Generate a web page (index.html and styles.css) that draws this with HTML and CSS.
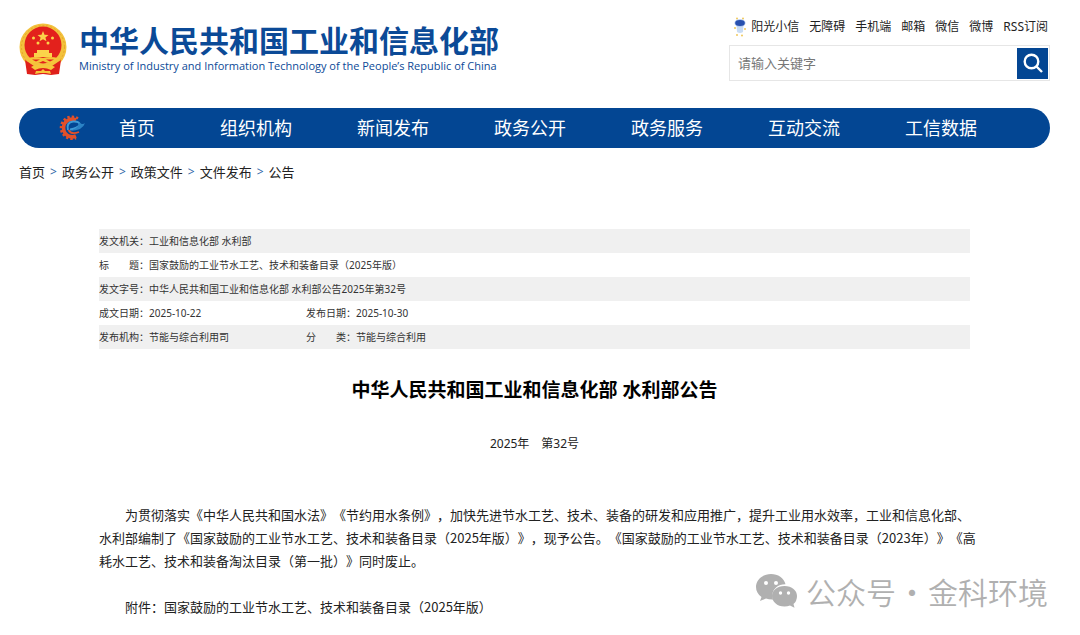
FILE: index.html
```html
<!DOCTYPE html>
<html lang="zh-CN">
<head>
<meta charset="utf-8">
<title>中华人民共和国工业和信息化部 水利部公告</title>
<link rel="stylesheet" href="styles.css">
</head>
<body>
<div class="page">
  <header class="header">
    <a class="brand" href="#">
      <svg class="emblem" viewBox="0 0 48 52" aria-hidden="true">
        <circle cx="24" cy="24" r="23.500" fill="#f3c23c"/>
        <circle cx="24" cy="24" r="21.500" fill="none" stroke="#e8a52c" stroke-width="1" stroke-dasharray="2 2"/>
        <circle cx="24" cy="22" r="18.500" fill="#e3211c"/>
        <path d="M24 8l1.500 3.700 4 .3-3.100 2.500 1.100 3.800-3.500-2.100-3.500 2.100 1.100-3.800-3.100-2.500 4-.3z" fill="#fbd34a"/>
        <g fill="#fbd34a"><circle cx="14.500" cy="15" r="1.500"/><circle cx="33.500" cy="15" r="1.500"/><circle cx="19" cy="20" r="1.500"/><circle cx="29" cy="20" r="1.500"/>
        <path d="M18 27h12v3h3v4H15v-4h3z"/></g>
        <path d="M6 37L8 51 16 52 24 51 32 52 40 51 42 37 33 43H15z" fill="#df201b"/>
        <path d="M9 35Q17 33 24 35Q31 33 39 35L35 40Q29 41 24 38Q19 41 13 40z" fill="#f6c63a"/>
        <path d="M13 36.500h8l-4 2zM35 36.500h-8l4 2z" fill="#e3211c"/>
        <path d="M12 44q6-4 12-1q6-3 12 1l-4 3q-8-4-16 0zM16 51l1-3h5l2-2 2 2h5l1 3-5-1h-6z" fill="#f6c63a"/>
      </svg>
      <span class="brand-text">
        <span class="brand-cn">中华人民共和国工业和信息化部</span>
        <span class="brand-en" lang="en">Ministry of Industry and Information Technology of the People’s Republic of China</span>
      </span>
    </a>
    <div class="tools">
      <nav class="quick" aria-label="快捷链接">
        <a class="mascot-link" href="#"><svg class="mascot" viewBox="0 0 12 20" aria-hidden="true">
          <g fill="#efc95c"><circle cx="3" cy="1.500" r="1"/><circle cx="9" cy="1.500" r="1"/><circle cx="1" cy="11" r="1"/><circle cx="11" cy="12" r="1"/><circle cx="3" cy="18" r="1"/><circle cx="8" cy="18.500" r="1"/></g>
          <path d="M2.500 8h7l-.5 7q-3 2-6 0z" fill="#c9dcf4"/>
          <ellipse cx="6" cy="6" rx="5.500" ry="3.800" fill="#a9c2ec"/><ellipse cx="6" cy="6" rx="4.800" ry="3" fill="#2850ae"/>
        </svg>阳光小信</a>
        <a href="#">无障碍</a>
        <a href="#">手机端</a>
        <a href="#">邮箱</a>
        <a href="#">微信</a>
        <a href="#">微博</a>
        <a href="#">RSS订阅</a>
      </nav>
      <form class="search">
        <input class="search-input" type="text" placeholder="请输入关键字" aria-label="请输入关键字">
        <button class="search-button" type="button" aria-label="搜索">
          <svg class="search-icon" viewBox="0 0 20 20" aria-hidden="true"><circle cx="8.500" cy="8.500" r="6.800"/><path d="M13.500 13.500L19 19"/></svg>
        </button>
      </form>
    </div>
  </header>

  <nav class="menu" aria-label="主导航">
    <svg class="gear" viewBox="0 0 28 26" aria-hidden="true">
      <path d="M18 5A8.800 8.800 0 1 0 18 21" fill="none" stroke="#e2502a" stroke-width="3.600"/>
      <path d="M20 3.500A11 11 0 1 0 18 23" fill="none" stroke="#e2502a" stroke-width="2.600" stroke-dasharray="2.300 2"/>
      <path d="M10 15Q8 7.500 15 6.500Q21 6 22 9.500Q20 13.500 12 14.500" fill="none" stroke="#3e9ad6" stroke-width="2"/>
      <path d="M21 8Q25 10 27 8Q25 15.500 12 16Q20 13.500 21 8z" fill="#2b82c4"/>
      <path d="M10.500 15Q13 20 21 17" fill="none" stroke="#e2502a" stroke-width="1.800"/>
    </svg>
    <a href="#">首页</a>
    <a href="#">组织机构</a>
    <a href="#">新闻发布</a>
    <a href="#">政务公开</a>
    <a href="#">政务服务</a>
    <a href="#">互动交流</a>
    <a href="#">工信数据</a>
  </nav>

  <nav class="crumbs" aria-label="当前位置">
    <a href="#">首页</a><span class="sep">&gt;</span>
    <a href="#">政务公开</a><span class="sep">&gt;</span>
    <a href="#">政策文件</a><span class="sep">&gt;</span>
    <a href="#">文件发布</a><span class="sep">&gt;</span>
    <a href="#">公告</a>
  </nav>

  <main class="article">
    <table class="meta">
      <colgroup><col class="col-label"><col class="col-value"><col class="col-label"><col></colgroup>
      <tbody>
        <tr><th scope="row">发文机关：</th><td colspan="3">工业和信息化部 水利部</td></tr>
        <tr><th scope="row">标　　题：</th><td colspan="3">国家鼓励的工业节水工艺、技术和装备目录（2025年版）</td></tr>
        <tr><th scope="row">发文字号：</th><td colspan="3">中华人民共和国工业和信息化部 水利部公告2025年第32号</td></tr>
        <tr><th scope="row">成文日期：</th><td>2025-10-22</td><th scope="row">发布日期：</th><td>2025-10-30</td></tr>
        <tr><th scope="row">发布机构：</th><td>节能与综合利用司</td><th scope="row">分　　类：</th><td>节能与综合利用</td></tr>
      </tbody>
    </table>
    <h1 class="title">中华人民共和国工业和信息化部 水利部公告</h1>
    <p class="number">2025年　第32号</p>
    <div class="body-text">
      <p>为贯彻落实《中华人民共和国水法》《节约用水条例》，加快先进节水工艺、技术、装备的研发和应用推广，提升工业用水效率，工业和信息化部、<br>水利部编制了《国家鼓励的工业节水工艺、技术和装备目录（2025年版）》，现予公告。《国家鼓励的工业节水工艺、技术和装备目录（2023年）》《高<br>耗水工艺、技术和装备淘汰目录（第一批）》同时废止。</p>
      <p>附件：国家鼓励的工业节水工艺、技术和装备目录（2025年版）</p>
    </div>
  </main>
</div>
<div class="watermark">
  <svg class="wechat" viewBox="0 0 42 34" aria-hidden="true">
    <path d="M15 0C6.500 0 0 5.800 0 13c0 4 2 7.500 5.500 10L4 27l6-2.500q3 1 7 .9C14 17 21 10 29.500 10.200 28 4 22 0 15 0z"/>
    <path d="M28.500 12C21 12 16 16.500 16 22s5 10.500 12.500 10.500q3 0 5.500-1l4.500 2.300-1-3.800Q41 27 41 22C41 16.500 36 12 28.500 12z"/>
    <g fill="#fff"><circle cx="10" cy="9" r="2"/><circle cx="20" cy="9" r="2"/><circle cx="24.500" cy="19" r="1.700"/><circle cx="32.500" cy="19" r="1.700"/></g>
  </svg>
  <span>公众号</span><span class="dot">·</span><span>金科环境</span>
</div>
</body>
</html>
```
FILE: styles.css
```css
* { box-sizing: border-box; }
body {
  margin: 0;
  background: #fff;
  color: #222;
  font-family: "Noto Sans", "Noto Sans CJK SC", sans-serif;
  text-spacing-trim: space-all;
}
a { color: inherit; text-decoration: none; }
p, h1 { margin: 0; }
.page { padding: 15px 30px 0 19px; }

.header {
  display: flex;
  justify-content: space-between;
  height: 93px;
}
.brand {
  display: flex;
  align-items: flex-start;
  gap: 12px;
  padding-top: 8px;
  color: #0b4a97;
  white-space: nowrap;
}
.emblem { width: 48px; height: 52px; }
.brand-text { display: flex; flex-direction: column; }
.brand-cn { font-size: 30px; line-height: 36px; font-weight: 700; }
.brand-en { font-family: "Open Sans", sans-serif; font-size: 11px; line-height: 14px; font-weight: 500; }

.tools { width: 321px; }
.quick {
  display: flex;
  justify-content: flex-end;
  gap: 10px;
  padding-right: 2px;
  font-size: 12px;
  line-height: 24px;
  white-space: nowrap;
}
.mascot-link { display: flex; align-items: center; gap: 5px; }
.mascot { width: 12px; height: 20px; }
.search {
  display: flex;
  align-items: center;
  height: 36px;
  margin-top: 6px;
  padding-right: 1px;
  border: 1px solid #e6e6e6;
}
.search-input {
  flex: 1;
  min-width: 0;
  padding: 0 8px;
  border: 0;
  outline: 0;
  background: none;
  font: inherit;
  font-size: 13px;
}
.search-input::placeholder { color: #777; }
.search-button {
  display: flex;
  align-items: center;
  justify-content: center;
  width: 31px;
  height: 31px;
  padding: 0;
  border: 0;
  background: #034693;
}
.search-icon { width: 20px; height: 20px; fill: none; stroke: #fff; stroke-width: 2.4; }

.menu {
  display: flex;
  align-items: center;
  gap: 65px;
  height: 40px;
  padding-left: 39px;
  border-radius: 20px;
  background: #034693;
  color: #fff;
  font-size: 18px;
  line-height: 40px;
  white-space: nowrap;
}
.gear { width: 28px; height: 26px; margin-right: -32px; }

.crumbs {
  display: flex;
  gap: 4px;
  margin-top: 14px;
  font-size: 13px;
  line-height: 20px;
}
.sep { color: #2f68a8; font-size: 12px; padding: 0 1px; }

.article { margin: 47px 80px 0; }
.meta {
  width: 100%;
  table-layout: fixed;
  border-collapse: collapse;
  color: #333;
  font-size: 10px;
  line-height: 24px;
}
.meta th, .meta td { padding: 0; font-weight: 400; text-align: left; white-space: nowrap; }
.meta tr:nth-child(odd) { background: #f0f0f0; }
.col-label { width: 50px; }
.col-value { width: 157px; }
.title {
  margin-top: 26px;
  color: #000;
  font-size: 19px;
  line-height: 30px;
  text-align: center;
}
.number {
  margin-top: 29px;
  font-size: 12px;
  line-height: 20px;
  text-align: center;
}
.body-text {
  margin-top: 49px;
  font-family: "Noto Sans CJK SC", sans-serif;
  font-size: 13px;
  line-height: 23px;
  white-space: nowrap;
}
.body-text p { text-indent: 2em; }
.body-text p + p { margin-top: 23px; }

.watermark {
  position: absolute;
  right: 32px;
  bottom: 22px;
  display: flex;
  align-items: center;
  color: #b0b0b0;
  font-family: "Noto Sans CJK SC", sans-serif;
  font-size: 30px;
  font-weight: 350;
  line-height: 44px;
}
.wechat { width: 42px; height: 34px; margin-right: 8px; fill: #b0b0b0; }
.dot { width: 32px; text-align: center; }
```
